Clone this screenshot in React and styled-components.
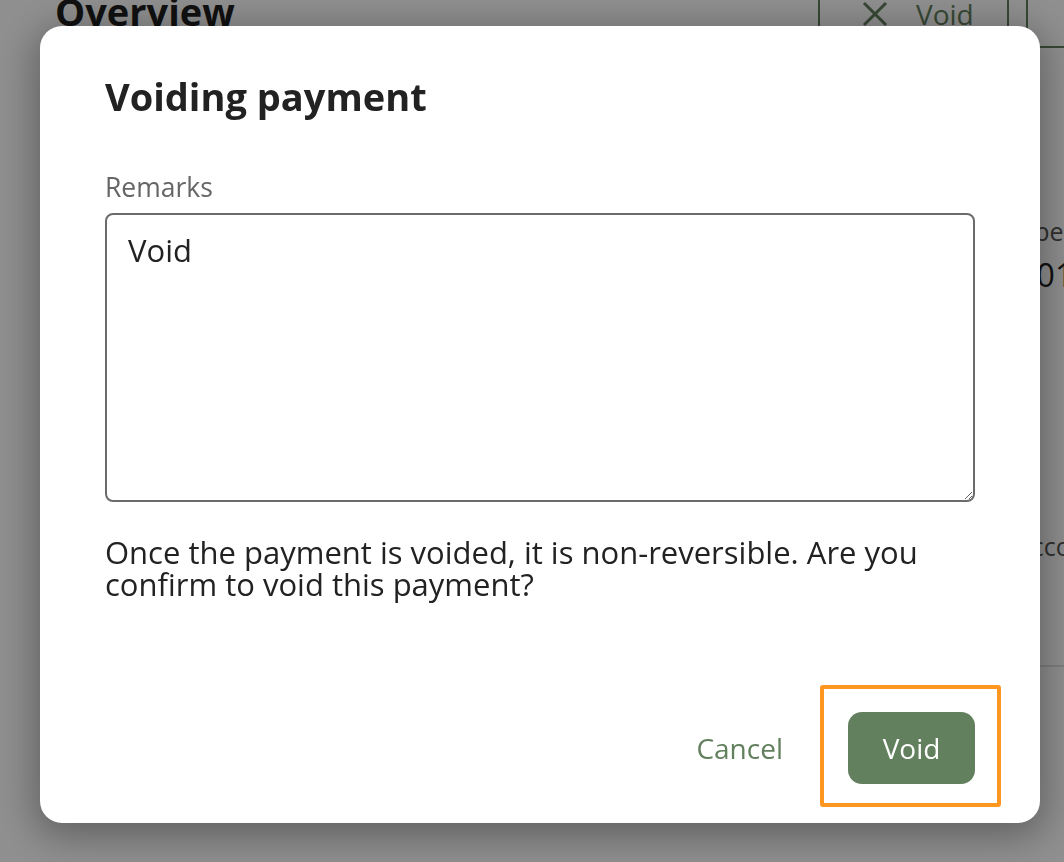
import React from "react";
import styled, { createGlobalStyle } from "styled-components";

const GlobalStyle = createGlobalStyle`
  html, body {
    margin: 0;
    padding: 0;
    width: 100%;
    height: 100%;
    overflow: hidden;
    background: #ffffff;
    font-family: "Open Sans", "Noto Sans", sans-serif;
  }
`;

const Page = styled.div`
  width: 1064px;
  height: 862px;
  position: relative;
  overflow: hidden;
  background: #ffffff;
`;

const PageHeader = styled.div`
  display: flex;
  align-items: flex-start;
  justify-content: space-between;
  padding-left: 55px;
  height: 48px;
`;

const PageTitle = styled.h1`
  margin: -13px 0 0;
  font-size: 38px;
  font-weight: 700;
  color: #1e1e1e;
  line-height: 48px;
`;

const HeaderActions = styled.div`
  display: flex;
  gap: 17px;
  margin-right: -153px;
`;

const OutlineButton = styled.button`
  display: flex;
  align-items: center;
  gap: 28px;
  box-sizing: border-box;
  height: 68px;
  margin-top: -20px;
  padding: 0 0 0 42px;
  border: 2px solid #62805d;
  background: #ffffff;
  color: #62805d;
  font-family: inherit;
  font-size: 28px;
  width: ${(p) => p.$width};
`;

const Body = styled.div`
  display: grid;
  grid-template-columns: 1fr 44px;
  padding-top: 167px;
`;

const SideColumn = styled.div`
  display: flex;
  flex-direction: column;
`;

const SideLabel = styled.div`
  font-size: 25px;
  line-height: 32px;
  color: #555;
  margin-top: ${(p) => p.$top || 0}px;
  margin-left: ${(p) => p.$shift || 0}px;
  white-space: nowrap;
`;

const SideValue = styled.div`
  font-size: 32px;
  line-height: 40px;
  color: #1e1e1e;
  margin-top: 8px;
  margin-left: -20px;
  white-space: nowrap;
`;

const SideRule = styled.div`
  height: 2px;
  background: #e2e2e2;
  margin: 103px -40px 0;
`;

const Overlay = styled.div`
  position: fixed;
  inset: 0;
  background: rgba(0, 0, 0, 0.44);
  display: flex;
  align-items: flex-start;
  padding: 26px 0 0 40px;
`;

const Modal = styled.div`
  width: 1000px;
  height: 797px;
  box-sizing: border-box;
  background: #ffffff;
  border-radius: 22px;
  box-shadow: 0 8px 38px 6px rgba(0, 0, 0, 0.32);
  padding: 47px 65px 39px 65px;
  display: flex;
  flex-direction: column;
`;

const ModalTitle = styled.h2`
  margin: 0 0 52px;
  font-size: 38px;
  font-weight: 700;
  color: #222;
  line-height: 46px;
`;

const FieldLabel = styled.label`
  font-size: 26.5px;
  color: #666;
  line-height: 32px;
  margin-bottom: 10px;
`;

const TextArea = styled.textarea`
  box-sizing: border-box;
  width: 100%;
  height: 289px;
  border: 2px solid #6b6b6b;
  border-radius: 8px;
  padding: 15px 21px;
  font-family: inherit;
  font-size: 31px;
  color: #222;
  line-height: 40px;
  resize: vertical;
  outline: none;
`;

const Message = styled.p`
  margin: 34px 0 0;
  font-size: 31px;
  line-height: 32px;
  color: #222;
`;

const Footer = styled.div`
  margin-top: auto;
  display: flex;
  justify-content: flex-end;
  align-items: center;
  gap: 49px;
`;

const TextButton = styled.button`
  border: none;
  background: transparent;
  color: #62805d;
  font-family: inherit;
  font-size: 28px;
  padding: 0 16px;
  height: 72px;
`;

const Highlight = styled.div`
  position: relative;
`;

const HighlightFrame = styled.div`
  position: absolute;
  inset: -27px -26px -23px -28px;
  border: 4px solid #ff961f;
  border-radius: 3px;
  pointer-events: none;
`;

const PrimaryButton = styled.button`
  width: 127px;
  height: 72px;
  border: none;
  border-radius: 14px;
  background: #62805d;
  color: #ffffff;
  font-family: inherit;
  font-size: 28px;
  display: block;
`;

const CloseIcon = () => (
  <svg width="26" height="26" viewBox="0 0 26 26">
    <path d="M2 2 L24 24 M24 2 L2 24" stroke="currentColor" strokeWidth="3" />
  </svg>
);

export default function App() {
  return (
    <>
      <GlobalStyle />
      <Page>
        <PageHeader>
          <PageTitle>Overview</PageTitle>
          <HeaderActions>
            <OutlineButton $width="191px">
              <CloseIcon />
              Void
            </OutlineButton>
            <OutlineButton $width="191px" />
          </HeaderActions>
        </PageHeader>
        <Body>
          <div />
          <SideColumn>
            <SideLabel $shift={-12}>Type</SideLabel>
            <SideValue>2001</SideValue>
            <SideLabel $top={235} $shift={-4}>Account</SideLabel>
            <SideRule />
          </SideColumn>
        </Body>
        <Overlay>
          <Modal>
            <ModalTitle>Voiding payment</ModalTitle>
            <FieldLabel>Remarks</FieldLabel>
            <TextArea defaultValue="Void" />
            <Message>
              Once the payment is voided, it is non-reversible. Are you confirm to void this payment?
            </Message>
            <Footer>
              <TextButton>Cancel</TextButton>
              <Highlight>
                <PrimaryButton>Void</PrimaryButton>
                <HighlightFrame />
              </Highlight>
            </Footer>
          </Modal>
        </Overlay>
      </Page>
    </>
  );
}
